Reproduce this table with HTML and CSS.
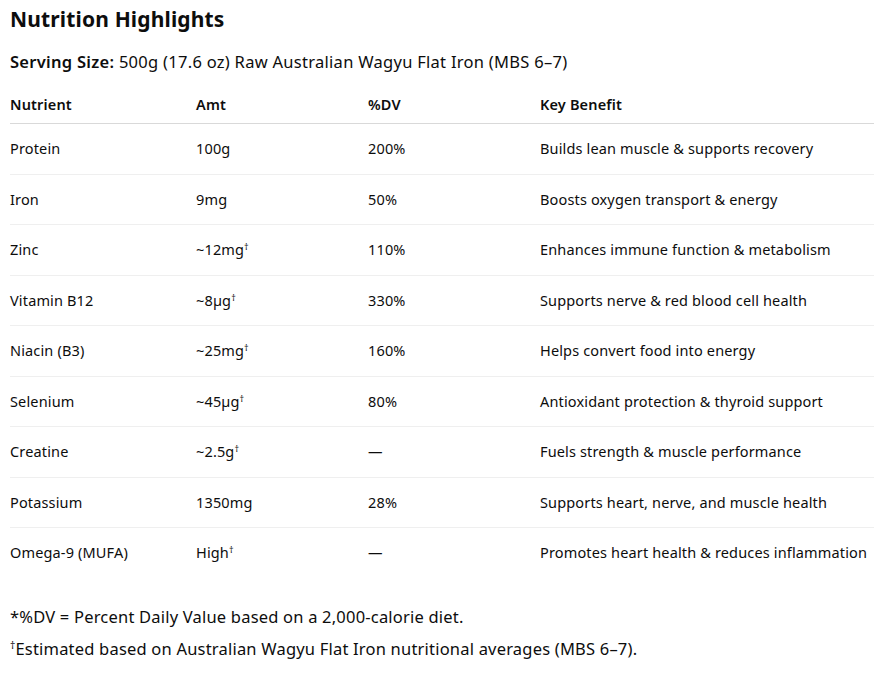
FILE: index.html
```html
<!DOCTYPE html>
<html lang="en">
<head>
<meta charset="utf-8">
<title>Nutrition Highlights</title>
<link rel="stylesheet" href="styles.css">
</head>
<body>
<main class="page">
  <h2 class="title">Nutrition Highlights</h2>
  <p class="serving"><strong>Serving Size:</strong> 500g (17.6 oz) Raw Australian Wagyu Flat Iron (MBS 6–7)</p>
  <table class="nut">
    <colgroup>
      <col class="c1"><col class="c2"><col class="c3"><col class="c4">
    </colgroup>
    <thead>
      <tr><th>Nutrient</th><th>Amt</th><th>%DV</th><th>Key Benefit</th></tr>
    </thead>
    <tbody>
      <tr><td>Protein</td><td>100g</td><td>200%</td><td>Builds lean muscle &amp; supports recovery</td></tr>
      <tr><td>Iron</td><td>9mg</td><td>50%</td><td>Boosts oxygen transport &amp; energy</td></tr>
      <tr><td>Zinc</td><td>~12mg<sup>†</sup></td><td>110%</td><td>Enhances immune function &amp; metabolism</td></tr>
      <tr><td>Vitamin B12</td><td>~8µg<sup>†</sup></td><td>330%</td><td>Supports nerve &amp; red blood cell health</td></tr>
      <tr><td>Niacin (B3)</td><td>~25mg<sup>†</sup></td><td>160%</td><td>Helps convert food into energy</td></tr>
      <tr><td>Selenium</td><td>~45µg<sup>†</sup></td><td>80%</td><td>Antioxidant protection &amp; thyroid support</td></tr>
      <tr><td>Creatine</td><td>~2.5g<sup>†</sup></td><td>—</td><td>Fuels strength &amp; muscle performance</td></tr>
      <tr><td>Potassium</td><td>1350mg</td><td>28%</td><td>Supports heart, nerve, and muscle health</td></tr>
      <tr><td>Omega-9 (MUFA)</td><td>High<sup>†</sup></td><td>—</td><td>Promotes heart health &amp; reduces inflammation</td></tr>
    </tbody>
  </table>
  <div class="notes">
    <p>*%DV = Percent Daily Value based on a 2,000-calorie diet.</p>
    <p><sup>†</sup>Estimated based on Australian Wagyu Flat Iron nutritional averages (MBS 6–7).</p>
  </div>
</main>
</body>
</html>
```

FILE: styles.css
```css
html, body {
  margin: 0;
  padding: 0;
  background: #ffffff;
}

body {
  font-family: "Noto Sans", "Open Sans", sans-serif;
  color: #0d0d0d;
}

.page {
  padding: 4px 3px 0 10px;
}

.title {
  margin: 0;
  font-size: 21px;
  letter-spacing: 0.15px;
  line-height: 30px;
  font-weight: 700;
}

.serving {
  margin: 16px 0 0;
  font-size: 16.5px;
  letter-spacing: 0.28px;
  line-height: 24px;
}

.serving strong {
  font-weight: 600;
}

.nut {
  margin-top: 20px;
  width: 864px;
  border-collapse: collapse;
  table-layout: fixed;
  font-size: 14.5px;
  letter-spacing: 0.15px;
}

.c1 { width: 186px; }
.c2 { width: 172px; }
.c3 { width: 172px; }
.c4 { width: 334px; }

.nut th {
  text-align: left;
  font-weight: 600;
  padding: 0 0 9px;
  line-height: 20px;
  border-bottom: 1px solid #d9d9d9;
}

.nut td {
  padding: 15px 0;
  line-height: 19.5px;
  border-bottom: 1px solid #efefef;
  white-space: nowrap;
}

.nut tbody tr:last-child td {
  border-bottom: none;
}

sup {
  font-size: 0.62em;
  line-height: 0;
  vertical-align: 0.55em;
}

.notes {
  margin-top: 23px;
  font-size: 16.5px;
  letter-spacing: 0.2px;
}

.notes p {
  margin: 0;
  line-height: 32px;
}
```
